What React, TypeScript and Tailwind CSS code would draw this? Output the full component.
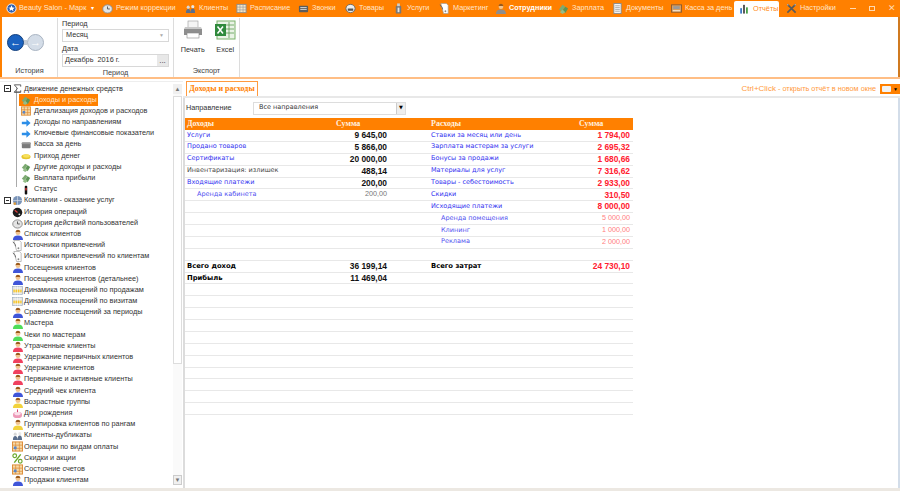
import type { ReactNode } from "react";

type IconKind =
  | "star" | "clock" | "people" | "grid" | "phone" | "box" | "bottle" | "note" | "stamp" | "money"
  | "doc" | "till" | "bars" | "tools" | "chart" | "arrow" | "cash" | "coin" | "status" | "globe"
  | "gauge" | "calendar" | "cake" | "percent" | "blue" | "green" | "red" | "yellow" | "sigma";

function Person({ color }: { color: string }) {
  return (
    <g>
      <path d="M1 12c0-3.5 2-5 5.500-5s5.500 1.500 5.500 5z" fill={color} />
      <circle cx="6.500" cy="4" r="2.600" fill="#f3c48e" />
      <path d="M3.800 3.500c.2-2 1.500-2.800 2.700-2.800s2.600.8 2.700 2.800c-1.800-.4-3.600-.4-5.400 0z" fill="#9a5a1c" />
    </g>
  );
}

function Icon({ kind, size = 12 }: { kind: IconKind; size?: number }) {
  let body: ReactNode = null;
  if (kind === "blue") body = <Person color="#3f55d8" />;
  if (kind === "green") body = <Person color="#4fdc58" />;
  if (kind === "red") body = <Person color="#f0415f" />;
  if (kind === "yellow") body = <Person color="#f2d23c" />;
  if (kind === "stamp") body = <Person color="#8d8d8d" />;
  if (kind === "star") body = <g><circle cx="6" cy="6" r="5" fill="#2f5fb0" stroke="#fff" /><path d="M6 2.500l1 2.400 2.500.2-1.900 1.600.6 2.500L6 7.400 3.800 8.700l.6-2.500L2.500 5.100 5 4.900z" fill="#fff" /></g>;
  if (kind === "clock") body = <g><ellipse cx="6" cy="6.500" rx="5.200" ry="4.500" fill="#e4e4e4" stroke="#8a8a8a" /><path d="M6 6.500V3.800M6 6.500h2.500" stroke="#555" /></g>;
  if (kind === "people") body = <g><circle cx="3.500" cy="4.500" r="1.700" fill="#d8d8d8" /><circle cx="8.500" cy="4" r="1.700" fill="#e8e8e8" /><path d="M1 11c0-3 1-4.500 2.500-4.500S6 8 6 11zM6 11c0-3.500 1-5 2.500-5s2.500 1.500 2.500 5z" fill="#5a6e8c" /></g>;
  if (kind === "grid") body = <g><rect x="1" y="1.500" width="10" height="9" fill="#f5e7c8" stroke="#8c8c8c" /><path d="M1 4.500h10M1 7.500h10M4.300 1.500v9M7.700 1.500v9" stroke="#9a9a9a" strokeWidth=".7" /></g>;
  if (kind === "phone") body = <g><rect x="1" y="3" width="10" height="7" rx="1" fill="#5c5c5c" /><path d="M2.500 5h7M2.500 7h7" stroke="#ddd" /></g>;
  if (kind === "box") body = <g><ellipse cx="6" cy="6" rx="5" ry="4.500" fill="#eee" stroke="#666" /><path d="M3 6h6v2.500H3z" fill="#555" /></g>;
  if (kind === "bottle") body = <g><rect x="3" y="3" width="6" height="8.500" rx="1" fill="#777" /><rect x="4.500" y=".5" width="3" height="3" fill="#ccc" /><rect x="5" y="5" width="2" height="5" fill="#e5e5e5" /></g>;
  if (kind === "note") body = <g><path d="M2 .5h6l2 2v9H5z" fill="#fff" stroke="#9a9a9a" strokeWidth=".7" /><path d="M1 2l2.500 3 .5 2" stroke="#666" fill="none" /><circle cx="7" cy="9" r="1" fill="#888" /></g>;
  if (kind === "money") body = <g><path d="M1 7l4-5 3 2-4 5z" fill="#7daa72" /><path d="M5 8l3-4 3 2-3 5z" fill="#5c9456" /><path d="M2 10l3-3 3 3-3 2z" fill="#94bd88" /></g>;
  if (kind === "doc") body = <g><rect x="2" y=".5" width="8" height="11" fill="#f4f4f4" stroke="#8a8a8a" /><path d="M3.500 3h5M3.500 5h5M3.500 7h5M3.500 9h5" stroke="#8a8a8a" strokeWidth=".7" /></g>;
  if (kind === "till") body = <g><rect x=".5" y="2" width="11" height="8" fill="#d8a060" stroke="#8a5a30" /><rect x="2.500" y="3.500" width="7" height="3" fill="#9a9a9a" /><path d="M2 8.500h8" stroke="#fff" /></g>;
  if (kind === "bars") body = <g><rect x="1.500" y="5" width="2" height="6.500" fill="#2c6fc0" /><rect x="5" y="1" width="2" height="10.500" fill="#3a3a3a" /><rect x="8.500" y="4" width="2" height="7.500" fill="#3a9a3a" /></g>;
  if (kind === "tools") body = <g><path d="M1.500 1.500l9 9M10.500 1.500l-9 9" stroke="#5a5a5a" strokeWidth="1.800" /><path d="M1 1l2 1-1 1zM11 1L9 2l1 1z" fill="#d8d8d8" /></g>;
  if (kind === "chart") body = <g><rect x=".5" y="1" width="11" height="10" fill="#f6d9a8" stroke="#dc8a34" /><path d="M.5 4.500h11M.5 8h11M4 1v10M8 1v10" stroke="#dc8a34" strokeWidth=".8" /><rect x="2" y="6" width="3" height="3" fill="#5a86c8" /></g>;
  if (kind === "arrow") body = <path d="M1 4.500h5.500V1.500L11.500 6l-5 4.500v-3H1z" fill="#2c8ee8" />;
  if (kind === "cash") body = <g><rect x="1" y="3" width="10.500" height="7" rx="1" fill="#7c7c7c" /><rect x="1" y="3" width="10.500" height="2" fill="#9a9a9a" /></g>;
  if (kind === "coin") body = <g><ellipse cx="6" cy="7" rx="5.500" ry="3" fill="#e6c52c" /><ellipse cx="6.500" cy="6" rx="4" ry="2" fill="#f7e05c" /></g>;
  if (kind === "status") body = <g><rect x="4.500" y="1" width="3" height="10.500" rx="1" fill="#111" /><rect x="5" y="3.500" width="2" height="3" fill="#c03030" /></g>;
  if (kind === "globe") body = <g><circle cx="6" cy="6" r="5" fill="#7a94b8" /><path d="M1 6h10M6 1v10" stroke="#d8e0ea" strokeWidth=".7" /><circle cx="3" cy="9.500" r="1.500" fill="#d89a40" /></g>;
  if (kind === "gauge") body = <g><circle cx="6" cy="6" r="5.200" fill="#1c1c1c" /><path d="M6 6L3 3.500" stroke="#e04040" strokeWidth="1.300" /><circle cx="8" cy="8" r="1" fill="#ddd" /></g>;
  if (kind === "calendar") body = <g><rect x=".5" y="1.500" width="11" height="9" fill="#e4e4e4" stroke="#9ab" strokeWidth=".7" /><rect x="1.500" y="5" width="9" height="3" fill="#f6c62c" /><path d="M3.500 1.500v9M6 1.500v9M8.500 1.500v9" stroke="#fff" strokeWidth=".6" /></g>;
  if (kind === "cake") body = <g><ellipse cx="6" cy="7.500" rx="5" ry="3.500" fill="#ee9ab8" /><ellipse cx="6" cy="6" rx="3.500" ry="2" fill="#fbe1ea" /><path d="M6 1.500v3" stroke="#d03060" /></g>;
  if (kind === "percent") body = <g><path d="M2.500 10.500l7-9" stroke="#6aa82c" strokeWidth="1.600" /><circle cx="3" cy="3" r="2" fill="none" stroke="#6aa82c" strokeWidth="1.300" /><circle cx="9" cy="9" r="2" fill="none" stroke="#6aa82c" strokeWidth="1.300" /></g>;
  if (kind === "sigma") body = <path d="M2.500 2h7v2M9.500 10h-7l3.500-4-3.500-4M2.500 10h7V8" fill="none" stroke="#555" strokeWidth="1" />;
  return (
    <svg viewBox="0 0 12 12" width={size} height={size} className="shrink-0">
      {body}
    </svg>
  );
}

const navItems: { label: string; icon: IconKind; w: string; bold?: boolean }[] = [
  { label: "Режим коррекции", icon: "clock", w: "w-[83px]" },
  { label: "Клиенты", icon: "people", w: "w-[51px]" },
  { label: "Расписание", icon: "grid", w: "w-[62px]" },
  { label: "Звонки", icon: "phone", w: "w-[47px]" },
  { label: "Товары", icon: "box", w: "w-[48px]" },
  { label: "Услуги", icon: "bottle", w: "w-[46px]" },
  { label: "Маркетинг", icon: "note", w: "w-[56px]" },
  { label: "Сотрудники", icon: "stamp", w: "w-[63px]", bold: true },
  { label: "Зарплата", icon: "money", w: "w-[54px]" },
  { label: "Документы", icon: "doc", w: "w-[59px]" },
  { label: "Касса за день", icon: "till", w: "w-[63px]" },
];

function TopBar() {
  return (
    <div className="flex h-[17px] items-center bg-[#ff8000] pl-[6px] text-[#ffe6cc]">
      <div className="flex w-[96px] items-center">
        <Icon kind="star" size={11} />
        <span className="ml-[2px] whitespace-nowrap">Beauty Salon - Марк</span>
        <span className="ml-[5px] text-[6px] text-white">▾</span>
      </div>
      {navItems.map((n) => (
        <div key={n.label} className={`flex items-center gap-[3px] ${n.w}`}>
          <Icon kind={n.icon} size={11} />
          <span className={n.bold ? "font-bold whitespace-nowrap text-white" : "whitespace-nowrap"}>{n.label}</span>
        </div>
      ))}
      <div className="mt-[1px] flex h-[16px] w-[45px] items-center gap-[4px] rounded-t-[2px] bg-white pl-[5px] text-[#ff8a20]">
        <Icon kind="bars" size={10} />
        <span>Отчёты</span>
      </div>
      <div className="ml-[7px] flex w-[64px] items-center gap-[3px]">
        <Icon kind="tools" size={11} />
        <span>Настройки</span>
      </div>
      <div className="flex w-[48px] items-center gap-[13px] text-[#ffd9b0]">
        <span className="h-[1px] w-[6px] bg-[#ffd9b0]" />
        <span className="h-[5px] w-[6px] border border-[#ffd9b0]" />
        <span className="text-[9px] leading-none">✕</span>
      </div>
    </div>
  );
}

function Group({ label, w, children }: { label: string; w: string; children: ReactNode }) {
  return (
    <div className={`flex h-full flex-col border-r border-[#dcdcdc] ${w}`}>
      <div className="flex-1">{children}</div>
      <div className="text-center leading-[12px] text-[#444]">{label}</div>
    </div>
  );
}

function Ribbon() {
  return (
    <div className="flex h-[60px] border-x-2 border-r-[#d07a20] border-l-[#ff8000] bg-white pt-[1px]">
      <Group label="История" w="w-[56px]">
        <div className="mt-[16px] flex items-center pl-[5px]">
          <div className="flex size-[17px] items-center justify-center rounded-full border border-[#123f7c] bg-[#1a62c0] text-[11px] font-bold text-white">←</div>
          <div className="h-[5px] w-[3px] bg-[#c4ccd6]" />
          <div className="flex size-[17px] items-center justify-center rounded-full border border-[#a9b4c2] bg-[#d4dde8] text-[11px] font-bold text-white">→</div>
        </div>
      </Group>
      <Group label="Период" w="w-[116px]">
        <div className="px-[4px] text-[#333]">
          <div className="pt-[1px] leading-[9px]">Период</div>
          <div className="mt-[1px] flex h-[13px] items-center justify-between border border-[#d8d8d8] pl-[3px] pr-[4px]">
            <span>Месяц</span>
            <span className="text-[5px] text-[#aaa]">▼</span>
          </div>
          <div className="mt-[2px] leading-[10px]">Дата</div>
          <div className="flex h-[13px] items-center justify-between border border-[#d8d8d8] pl-[2px]">
            <span className="whitespace-pre">Декабрь  2016 г.</span>
            <span className="flex h-full w-[11px] items-center justify-center bg-[#e8e8e8] text-[8px] leading-none">...</span>
          </div>
        </div>
      </Group>
      <Group label="Экспорт" w="w-[66px]">
        <div className="flex gap-[5px] pl-[5px] pt-[2px]">
          <div className="flex w-[28px] flex-col items-center">
            <svg viewBox="0 0 20 20" width="20" height="20">
              <rect x="5" y="1" width="10" height="7" fill="#f4f4f4" stroke="#999" strokeWidth=".6" />
              <path d="M1 9h18v6H1z" fill="#8e8e8e" />
              <path d="M1 9h18l-1-2H2z" fill="#c8c8c8" />
              <rect x="4" y="13" width="12" height="5" fill="#fff" stroke="#888" strokeWidth=".6" />
            </svg>
            <span className="mt-[4px] leading-[12px] text-[#333]">Печать</span>
          </div>
          <div className="flex w-[28px] flex-col items-center">
            <svg viewBox="0 0 22 20" width="22" height="20">
              <rect x="3" y="1" width="18" height="18" fill="#eaf3e6" stroke="#7ab26a" />
              <path d="M11 5h9M11 9h9M11 13h9M15 2v16" stroke="#5a9a50" strokeWidth=".8" />
              <rect x="1" y="4" width="11" height="12" fill="#2f8a3c" />
              <path d="M3.500 6.500l5.500 7M9 6.500l-5.500 7" stroke="#fff" strokeWidth="1.500" />
            </svg>
            <span className="mt-[4px] leading-[12px] text-[#333]">Excel</span>
          </div>
        </div>
      </Group>
    </div>
  );
}

const treeItems: { label: string; icon: IconKind; child?: boolean; root?: boolean; active?: boolean }[] = [
  { label: "Движение денежных средств", icon: "sigma", root: true },
  { label: "Доходы и расходы", icon: "money", child: true, active: true },
  { label: "Детализация доходов и расходов", icon: "chart", child: true },
  { label: "Доходы по направлениям", icon: "arrow", child: true },
  { label: "Ключевые финансовые показатели", icon: "arrow", child: true },
  { label: "Касса за день", icon: "cash", child: true },
  { label: "Приход денег", icon: "coin", child: true },
  { label: "Другие доходы и расходы", icon: "money", child: true },
  { label: "Выплата прибыли", icon: "money", child: true },
  { label: "Статус", icon: "status", child: true },
  { label: "Компании - оказание услуг", icon: "globe", root: true },
  { label: "История операций", icon: "gauge" },
  { label: "История действий пользователей", icon: "clock" },
  { label: "Список клиентов", icon: "blue" },
  { label: "Источники привлечений", icon: "note" },
  { label: "Источники привлечений по клиентам", icon: "note" },
  { label: "Посещения клиентов", icon: "blue" },
  { label: "Посещения клиентов (детальнее)", icon: "blue" },
  { label: "Динамика посещений по продажам", icon: "calendar" },
  { label: "Динамика посещений по визитам", icon: "calendar" },
  { label: "Сравнение посещений за периоды", icon: "blue" },
  { label: "Мастера", icon: "green" },
  { label: "Чеки по мастерам", icon: "green" },
  { label: "Утраченные клиенты", icon: "red" },
  { label: "Удержание первичных клиентов", icon: "red" },
  { label: "Удержание клиентов", icon: "red" },
  { label: "Первичные и активные клиенты", icon: "red" },
  { label: "Средний чек клиента", icon: "blue" },
  { label: "Возрастные группы", icon: "yellow" },
  { label: "Дни рождения", icon: "cake" },
  { label: "Группировка клиентов по рангам", icon: "yellow" },
  { label: "Клиенты-дубликаты", icon: "people" },
  { label: "Операции по видам оплаты", icon: "chart" },
  { label: "Скидки и акции", icon: "percent" },
  { label: "Состояние счетов", icon: "chart" },
  { label: "Продажи клиентам", icon: "blue" },
];

function Tree() {
  return (
    <div className="relative h-[407px] w-[183px] overflow-hidden border-t border-[#eee] pt-[1.400px]">
      <div className="absolute top-[6px] left-[16px] h-[99px] w-[1px] bg-[#aaa]" />
      {treeItems.map((t) => (
        <div key={t.label} className="relative flex h-[11.19px] items-center whitespace-nowrap text-[#333]">
          {t.root && (
            <span className="absolute left-[4px] flex size-[7px] items-center justify-center border border-[#333] bg-white text-[6px] leading-none">
              <span className="h-[1px] w-[3px] bg-[#333]" />
            </span>
          )}
          {t.child ? (
            <div className={t.active ? "ml-[19px] flex h-[12px] w-[79px] items-center gap-[3px] bg-[#ff8000] pl-[2px] text-[#ffe6cc]" : "ml-[19px] flex items-center gap-[3px] pl-[2px]"}>
              <Icon kind={t.icon} size={10} />
              <span>{t.label}</span>
            </div>
          ) : (
            <div className="flex items-center gap-[1px] pl-[12px]">
              <Icon kind={t.icon} size={11} />
              <span>{t.label}</span>
            </div>
          )}
        </div>
      ))}
      <div className="absolute top-[2px] right-[1px] bottom-[3px] flex w-[9px] flex-col items-center justify-between bg-[#fafafa] text-[6px] text-[#777]">
        <span className="flex h-[10px] w-full items-center justify-center bg-[#f0f0f0]">▲</span>
        <div className="absolute top-[12px] h-[268px] w-full border border-[#ddd] bg-white" />
        <span className="flex h-[10px] w-full items-center justify-center border border-[#ccc] bg-[#f0f0f0]">▼</span>
      </div>
    </div>
  );
}

type Cell = { label: string; value: string; tone?: "link" | "plain" | "sub" | "total" };

const incomes: (Cell | null)[] = [
  { label: "Услуги", value: "9 645,00" },
  { label: "Продано товаров", value: "5 866,00" },
  { label: "Сертификаты", value: "20 000,00" },
  { label: "Инвентаризация: излишек", value: "488,14", tone: "plain" },
  { label: "Входящие платежи", value: "200,00" },
  { label: "Аренда кабинета", value: "200,00", tone: "sub" },
  null, null, null, null, null,
  { label: "Всего доход", value: "36 199,14", tone: "total" },
  { label: "Прибыль", value: "11 469,04", tone: "total" },
];

const costs: (Cell | null)[] = [
  { label: "Ставки за месяц или день", value: "1 794,00" },
  { label: "Зарплата мастерам за услуги", value: "2 695,32" },
  { label: "Бонусы за продажи", value: "1 680,66" },
  { label: "Материалы для услуг", value: "7 316,62" },
  { label: "Товары - себестоимость", value: "2 933,00" },
  { label: "Скидки", value: "310,50" },
  { label: "Исходящие платежи", value: "8 000,00" },
  { label: "Аренда помещения", value: "5 000,00", tone: "sub" },
  { label: "Клининг", value: "1 000,00", tone: "sub" },
  { label: "Реклама", value: "2 000,00", tone: "sub" },
  null,
  { label: "Всего затрат", value: "24 730,10", tone: "total" },
];

function Row({ cell, red }: { cell: Cell | null | undefined; red?: boolean }) {
  if (!cell) return <div className="h-full w-full" />;
  const tone = cell.tone ?? "link";
  const labelClass =
    tone === "link" ? "text-[#3030f0]" :
    tone === "plain" ? "text-[#444]" :
    tone === "sub" ? "pl-[10px] text-[#5050f0]" :
    "text-[6.800px] font-bold text-black";
  let valueClass = "[font-family:Liberation_Sans,sans-serif] font-bold text-[8.400px] text-[#111]";
  if (red) {
    valueClass = tone === "sub"
      ? "[font-family:Liberation_Sans,sans-serif] text-[7.200px] text-[#ff8080]"
      : "[font-family:Liberation_Sans,sans-serif] font-bold text-[8.400px] text-[#ff2030]";
  } else if (tone === "sub") {
    valueClass = "[font-family:Liberation_Sans,sans-serif] text-[7.200px] text-[#777]";
  }
  return (
    <div className="flex h-full w-full items-center justify-between whitespace-nowrap">
      <span className={labelClass}>{cell.label}</span>
      <span className={valueClass}>{cell.value}</span>
    </div>
  );
}

function ReportTable() {
  const rows = Array.from({ length: 24 }, (_, i) => i);
  return (
    <div className="w-[448px] [font-family:DejaVu_Sans,sans-serif] text-[6.500px]">
      <div className="flex h-[12px] items-center bg-[#ff8000] [font-family:Liberation_Serif,serif] text-[8px] font-bold text-[#fff2e0]">
        <div className="flex w-[202px] pl-[2px]">
          <span className="w-[149px]">Доходы</span>
          <span>Сумма</span>
        </div>
        <div className="ml-[44px] flex w-[199px]">
          <span className="w-[148px]">Расходы</span>
          <span>Сумма</span>
        </div>
      </div>
      {rows.map((i) => (
        <div key={i} className="flex h-[11.875px] items-center border-b border-[#e8e8e8]">
          <div className="h-full w-[202px] pl-[2px]"><Row cell={incomes[i]} /></div>
          <div className="ml-[44px] h-full w-[199px]"><Row cell={costs[i]} red /></div>
        </div>
      ))}
    </div>
  );
}

function ReportPane() {
  return (
    <div className="flex h-[407px] flex-1 flex-col border-l-2 border-[#dcdcdc]">
      <div className="-ml-[2px] flex h-[17px] items-end justify-between border-b-2 border-[#e8e8e8] bg-white pl-[3px]">
        <div className="flex h-[15px] w-[72px] items-center justify-center whitespace-nowrap border-x border-t border-[#ff9a40] [font-family:Liberation_Serif,serif] text-[8px] font-bold text-[#ff8000]">
          Доходы и расходы
        </div>
        <div className="mb-[3px] flex items-center gap-[4px] self-start pt-[2px]">
          <span className="text-[#ff9a40]"><span className="text-[8px]">Ctrl+Click</span> - открыть отчёт в новом окне</span>
          <div className="flex h-[10px] w-[20px] items-center justify-center gap-[2px] bg-[#ff8000]">
            <span className="h-[6px] w-[9px] rounded-[1px] bg-[#f2f2f2]" />
            <span className="text-[5px] leading-none text-black">▼</span>
          </div>
        </div>
      </div>
      <div className="flex-1 border-r-2 border-[#d3dde9] bg-white">
        <div className="flex h-[20px] items-center pl-[1px]">
          <span className="w-[67px] text-[#333]">Направление</span>
          <div className="flex h-[13px] w-[153px] items-center justify-between border border-[#ddd] pl-[5px] [font-family:DejaVu_Sans,sans-serif] text-[6.500px] text-[#333]">
            <span>Все направления</span>
            <span className="flex h-full w-[9px] items-center justify-center border-l border-[#ccc] bg-[#eee] text-[5px] text-black">▼</span>
          </div>
        </div>
        <ReportTable />
      </div>
    </div>
  );
}

export default function App() {
  return (
    <div className="h-[491px] w-[900px] overflow-hidden bg-white [font-family:Liberation_Sans,sans-serif] text-[7.300px]">
      <TopBar />
      <Ribbon />
      <div className="h-[2px] bg-[#ffbe85]" />
      <div className="h-[2px] bg-white" />
      <div className="flex">
        <Tree />
        <ReportPane />
      </div>
      <div className="h-[3px] bg-[#ece8e2]" />
      <div className="h-[2px] bg-[#f4f4f4]" />
    </div>
  );
}
